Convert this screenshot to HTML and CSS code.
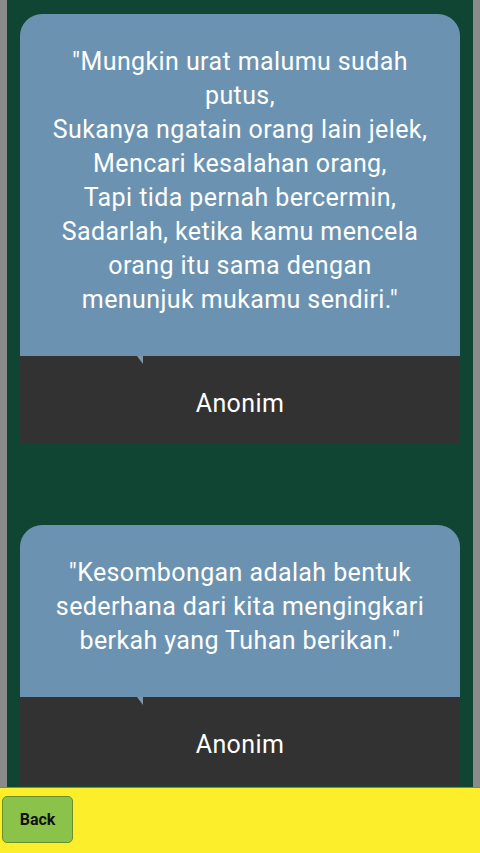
FILE: index.html
```html
<!DOCTYPE html>
<html lang="en">
<head>
    <meta charset="UTF-8">
    <meta name="viewport" content="width=device-width, initial-scale=1.0">
    <title>Kata Bijak</title>
    <link rel="stylesheet" href="styles.css">
</head>
<body>
    <div class="screen">
        <div class="list">
            <div class="card">
                <div class="quote">
                    "Mungkin urat malumu sudah<br>
                    putus,<br>
                    Sukanya ngatain orang lain jelek,<br>
                    Mencari kesalahan orang,<br>
                    Tapi tida pernah bercermin,<br>
                    Sadarlah, ketika kamu mencela<br>
                    orang itu sama dengan<br>
                    menunjuk mukamu sendiri."
                    <span class="tail"></span>
                </div>
                <div class="author">Anonim</div>
            </div>
            <div class="card">
                <div class="quote">
                    "Kesombongan adalah bentuk<br>
                    sederhana dari kita mengingkari<br>
                    berkah yang Tuhan berikan."
                    <span class="tail"></span>
                </div>
                <div class="author">Anonim</div>
            </div>
        </div>
        <div class="footer">
            <button class="back-btn">Back</button>
        </div>
    </div>
</body>
</html>
```

FILE: styles.css
```css
body {
    margin: 0;
    background-color: #8a8a8a;
    font-family: Roboto, "Noto Sans", sans-serif;
}
.screen {
    display: flex;
    flex-direction: column;
    height: 853px;
}
.list {
    flex: 1;
    overflow: hidden;
    margin: 0 7px;
    padding: 14px 13px 0;
    background-color: #0f4532;
    display: flex;
    flex-direction: column;
    gap: 81px;
}
.card {
    flex-shrink: 0;
}
.quote {
    position: relative;
    background-color: #6b93b1;
    color: #fff;
    border-radius: 22px 22px 0 0;
    padding: 31px 14px 39px;
    font-size: 25px;
    line-height: 34px;
    letter-spacing: 0.4px;
    white-space: nowrap;
    text-align: center;
}
.tail {
    position: absolute;
    left: 117px;
    bottom: -8px;
    width: 0;
    height: 0;
    border-left: 6px solid transparent;
    border-top: 8px solid #7f97a8;
}
.author {
    background-color: #323232;
    color: #fff;
    height: 88px;
    box-sizing: border-box;
    padding-top: 7px;
    display: flex;
    align-items: center;
    justify-content: center;
    font-size: 25px;
    letter-spacing: 0.4px;
}
.footer {
    height: 66px;
    background-color: #fcee2a;
    border-top: 1px solid #8a8a20;
    box-sizing: border-box;
    padding: 8px 0 0 2px;
}
.back-btn {
    width: 71px;
    height: 47px;
    background-color: #8bc34a;
    border: 1px solid #6a8f2a;
    border-radius: 5px;
    font-family: Roboto, sans-serif;
    font-weight: bold;
    font-size: 16px;
    color: #111;
}
```
